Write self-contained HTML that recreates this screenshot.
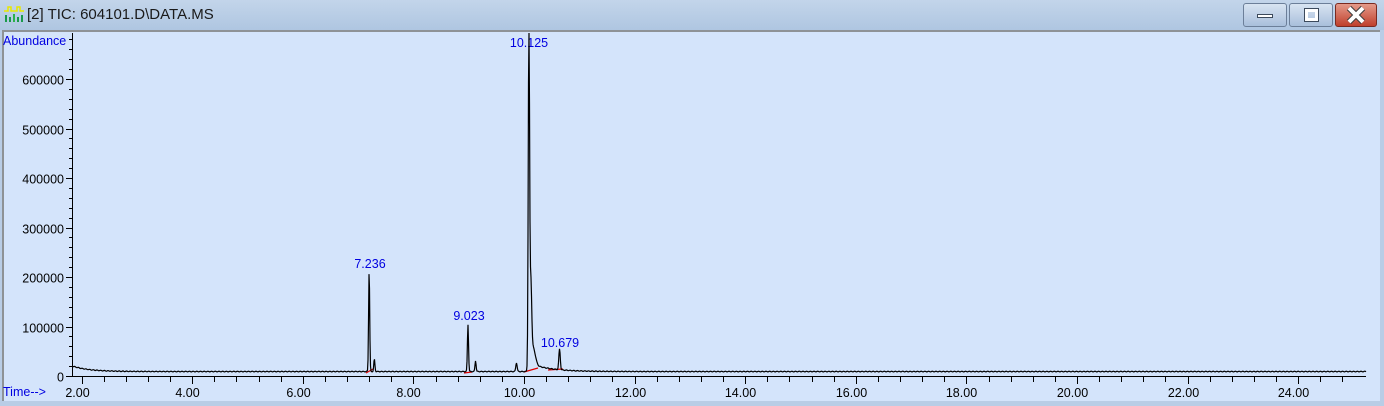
<!DOCTYPE html>
<html><head><meta charset="utf-8"><style>
html,body{margin:0;padding:0;width:1384px;height:406px;overflow:hidden;background:#b9cde6;font-family:"Liberation Sans",sans-serif}
.title{position:absolute;left:0;top:0;width:1384px;height:30px;background:linear-gradient(#c3d5ea,#afc6e1)}
.title span{position:absolute;left:27px;top:6px;font-size:15px;color:#1a1a1a}
.btn{position:absolute;top:3px;width:44px;height:24px;border:1px solid #6c7f99;border-radius:3px;background:linear-gradient(#d8e4f2,#a9bfdb);box-sizing:border-box}
.plot{position:absolute;left:2px;top:30px;width:1378px;height:371px;background:#d4e4fb;border-top:2px solid #8e9296;border-left:2px solid #8e9296;box-sizing:border-box}
svg text{font-family:"Liberation Sans",sans-serif}
</style></head><body>
<div class="title">
<svg style="position:absolute;left:3px;top:6px" width="22" height="18"><path d="M1 5h4V1h3v4h6V1h3v4h4" stroke="#e8e800" fill="none" stroke-width="1.5"/><rect x="2" y="9" width="2" height="7" fill="#1a9a4a"/><rect x="6" y="11" width="2" height="5" fill="#1a9a4a"/><rect x="10" y="8" width="2" height="8" fill="#2bb24c"/><rect x="14" y="11" width="2" height="5" fill="#1a9a4a"/><rect x="18" y="9" width="2" height="7" fill="#1a9a4a"/></svg>
<span>[2] TIC: 604101.D\DATA.MS</span>
<div class="btn" style="left:1243px"><div style="position:absolute;left:13px;top:10px;width:16px;height:4px;background:#fff;border:1px solid #3c4a5c;box-sizing:border-box"></div></div>
<div class="btn" style="left:1289px"><div style="position:absolute;left:15px;top:5px;width:13px;height:12px;border:3px solid #fff;outline:1px solid #3c4a5c;box-sizing:border-box"></div></div>
<div class="btn" style="left:1335px;width:42px;border-color:#7a2a20;background:linear-gradient(#e49a8a,#c0402c)"><svg width="40" height="22"><path d="M13 4l14 14M27 4L13 18" stroke="#3c3c3c" stroke-width="6"/><path d="M13 4l14 14M27 4L13 18" stroke="#fff" stroke-width="4"/></svg></div>
</div>
<div class="plot"></div>
<svg style="position:absolute;left:0;top:0" width="1384" height="406">
<g font-size="12.5" fill="#000">
<text x="3" y="45" fill="#0000e0">Abundance</text>
<text x="3" y="396" fill="#0000e0">Time--&gt;</text>
<line x1="72.5" y1="33" x2="72.5" y2="376" stroke="#000"/>
<line x1="72" y1="376.5" x2="1366" y2="376.5" stroke="#000"/>
<g id="yt"></g><g id="xt"></g>
</g>
<g font-size="12.5" fill="#0000e0" text-anchor="middle">
<text x="370" y="268">7.236</text>
<text x="469" y="320">9.023</text>
<text x="529" y="47">10.125</text>
<text x="560" y="347">10.679</text>
</g>
<path d="M366 373l7-4M464 373l8-1M524 372l14-4M548 370l15-1" stroke="#e00000" stroke-width="1.2" fill="none"/>
<polyline id="tr" fill="none" stroke="#000" stroke-width="1.2"/>
</svg>
<script>
var ns="http://www.w3.org/2000/svg";
function el(n,a,p,t){var e=document.createElementNS(ns,n);for(var k in a)e.setAttribute(k,a[k]);if(t)e.textContent=t;document.getElementById(p).appendChild(e);}
function Y(v){return 376-v*0.000495}
function X(t){return 524+(t-10)*55.3}
for(var v=0;v<=680000;v+=20000){var y=Math.round(Y(v))+0.5;var maj=v%100000==0;el("line",{x1:maj?66:69,y1:y,x2:72,y2:y,stroke:"#000"},"yt");if(maj)el("text",{x:64,y:y+5,"text-anchor":"end"},"yt",String(v));}
for(var i=0;i<=58;i++){var t=1.6+i*0.4;var x=Math.round(X(t))+0.5;if(x<73||x>1366)continue;var maj=Math.abs(t-Math.round(t))<0.01&&Math.round(t)%2==0;el("line",{x1:x,y1:377,x2:x,y2:maj?384:382,stroke:"#000"},"xt");if(maj)el("text",{x:x-5,y:397,"text-anchor":"middle"},"xt",Math.round(t).toFixed(2));}
var pk=[[7.236,205000,0.01],[7.33,25000,0.01],[9.023,95000,0.01],[9.16,22000,0.01],[9.9,18000,0.012],[10.125,700000,0.012],[10.16,150000,0.015],[10.2,35000,0.04],[10.679,42000,0.013]];
var pts=[];
var X0=522;
for(var x=73;x<=1366;x+=0.5){var t=10+(x-X0)/55.3;var v=9000+10000*Math.exp(-(t-1.9)/0.3)+ (Math.sin(x*1.7)*700);
if(t>10.12)v+=18000*Math.exp(-(t-10.12)/0.35);
for(var j=0;j<pk.length;j++){var d=(t-pk[j][0])/pk[j][2];v+=pk[j][1]*Math.exp(-d*d/2);}
var y=Math.max(33,Y(v));pts.push(x+","+y.toFixed(1));}
document.getElementById("tr").setAttribute("points",pts.join(" "));
</script>
</body></html>
